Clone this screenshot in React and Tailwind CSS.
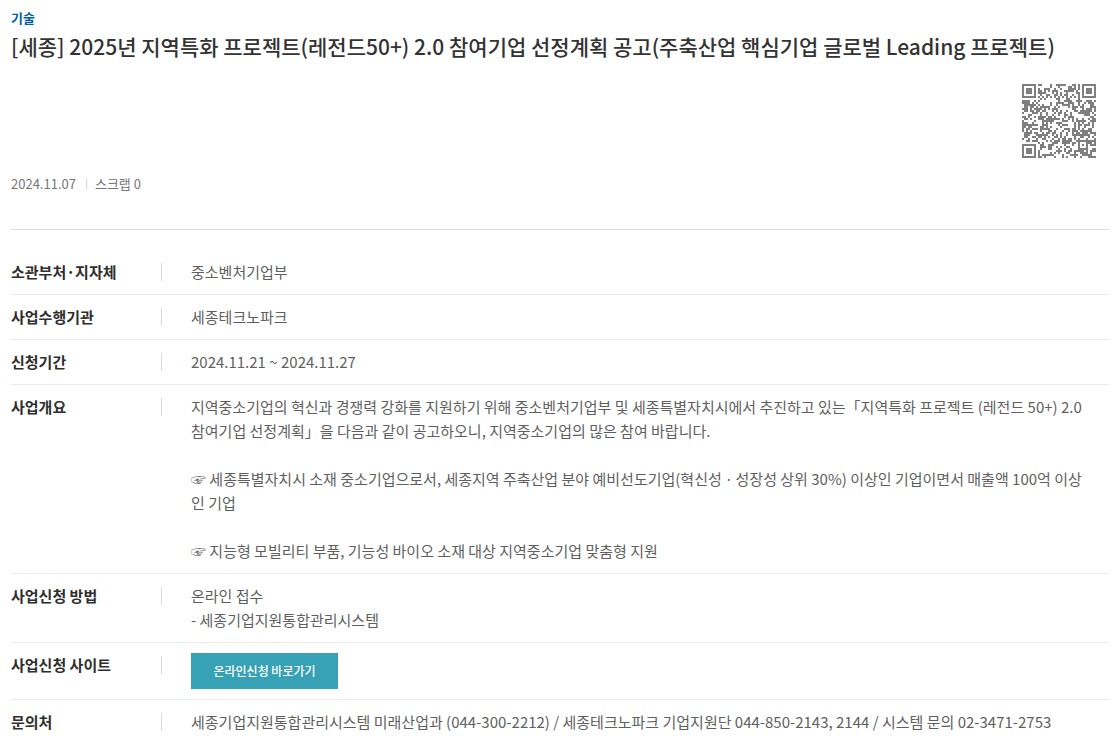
import React from "react";

const SIZE = 37;
const DATA_CODEWORDS = 108;
const EC_CODEWORDS = 26;

const EXP = [];
const LOG = [];
for (let i = 0, v = 1; i < 255; i++) {
  EXP[i] = v;
  LOG[v] = i;
  v = (v << 1) ^ (v & 128 ? 0x11d : 0);
}
const mul = (a, b) => (a && b ? EXP[(LOG[a] + LOG[b]) % 255] : 0);

// Byte-mode data followed by its Reed-Solomon remainder (version 5, level L).
function codewords(text) {
  const bits = [];
  const push = (value, length) => {
    for (let i = length - 1; i >= 0; i--) bits.push((value >> i) & 1);
  };
  push(4, 4);
  push(text.length, 8);
  for (const ch of text) push(ch.charCodeAt(0), 8);
  push(0, 4);
  const data = [];
  for (let i = 0; i < bits.length; i += 8) data.push(parseInt(bits.slice(i, i + 8).join(""), 2));
  for (let pad = 0xec; data.length < DATA_CODEWORDS; pad ^= 0xfd) data.push(pad);

  let gen = [1];
  for (let i = 0; i < EC_CODEWORDS; i++) {
    const next = [...gen, 0];
    gen.forEach((c, j) => (next[j + 1] ^= mul(c, EXP[i])));
    gen = next;
  }
  const rem = [...data, ...Array(EC_CODEWORDS).fill(0)];
  for (let i = 0; i < data.length; i++) {
    const f = rem[i];
    gen.forEach((c, j) => (rem[i + j] ^= mul(c, f)));
  }
  return [...data, ...rem.slice(data.length)];
}

const MASK = 3;
const masked = (x, y) => ((x + y) % 3 === 0 ? 1 : 0);

function qrPath(text) {
  const grid = Array.from({ length: SIZE }, () => Array(SIZE).fill(null));
  const set = (x, y, v) => {
    if (x >= 0 && y >= 0 && x < SIZE && y < SIZE) grid[y][x] = v ? 1 : 0;
  };

  // Timing, finder and alignment patterns
  for (let i = 0; i < SIZE; i++) {
    set(6, i, i % 2 === 0);
    set(i, 6, i % 2 === 0);
  }
  for (const [cx, cy] of [[3, 3], [SIZE - 4, 3], [3, SIZE - 4]]) {
    for (let dy = -4; dy <= 4; dy++)
      for (let dx = -4; dx <= 4; dx++) {
        const d = Math.max(Math.abs(dx), Math.abs(dy));
        set(cx + dx, cy + dy, d !== 2 && d !== 4);
      }
  }
  for (let dy = -2; dy <= 2; dy++)
    for (let dx = -2; dx <= 2; dx++) set(30 + dx, 30 + dy, Math.max(Math.abs(dx), Math.abs(dy)) !== 1);

  // Format information
  const info = (1 << 3) | MASK;
  let rem = info;
  for (let i = 0; i < 10; i++) rem = (rem << 1) ^ ((rem >>> 9) * 0x537);
  const format = ((info << 10) | rem) ^ 0x5412;
  const bit = (i) => (format >>> i) & 1;
  for (let i = 0; i < 6; i++) set(8, i, bit(i));
  set(8, 7, bit(6));
  set(8, 8, bit(7));
  set(7, 8, bit(8));
  for (let i = 9; i < 15; i++) set(14 - i, 8, bit(i));
  for (let i = 0; i < 8; i++) set(SIZE - 1 - i, 8, bit(i));
  for (let i = 8; i < 15; i++) set(8, SIZE - 15 + i, bit(i));
  set(8, SIZE - 8, 1);

  // Data, in two-column zigzags from the right
  const words = codewords(text);
  let n = 0;
  for (let right = SIZE - 1; right >= 1; right -= 2) {
    if (right === 6) right = 5;
    for (let v = 0; v < SIZE; v++)
      for (let j = 0; j < 2; j++) {
        const x = right - j;
        const y = ((right + 1) & 2) === 0 ? SIZE - 1 - v : v;
        if (grid[y][x] === null) {
          const value = n < words.length * 8 ? (words[n >> 3] >> (7 - (n & 7))) & 1 : 0;
          n++;
          set(x, y, value ^ masked(x, y));
        }
      }
  }
  return grid
    .flatMap((row, y) => row.map((cell, x) => (cell ? `M${x} ${y}h1v1h-1z` : "")))
    .join("");
}

const NOTICE_URL =
  "https://www.bizinfo.go.kr/web/lay1/bbs/S1T122C128/AS/74/view.do?pblancId=PBLN_000000000102670";

const noticePath = qrPath(NOTICE_URL);

function QrCode() {
  return (
    <svg
      role="img"
      aria-label="QR"
      viewBox="0 0 37 37"
      shapeRendering="crispEdges"
      className="size-[74px] text-[#7f7f7f]"
    >
      <path d={noticePath} fill="currentColor" />
    </svg>
  );
}

function Row({ label, children }) {
  return (
    <tr className="border-b border-[#ebebeb] align-top">
      <th scope="row" className="w-[180px] py-[10px] text-left font-bold text-[#2f2f2f]">
        <div className="flex w-[151px] items-center justify-between">
          {label}
          <span className="h-[18px] w-px bg-[#d9d9d9]" />
        </div>
      </th>
      <td className="py-[10px] text-[#5f5f5f]">{children}</td>
    </tr>
  );
}

export default function App() {
  return (
    <main className="bg-white pt-2 pr-[3px] pl-[11px] font-['Noto_Sans_CJK_KR',sans-serif]">
      <header className="border-b border-[#d9d9d9] pb-[35px]">
        <p className="text-[13px] leading-5 font-bold text-[#00629b]">기술</p>
        <h1 className="text-[21px] leading-9 font-medium text-[#333333]">
          [세종] 2025년 지역특화 프로젝트(레전드50+) 2.0 참여기업 선정계획 공고(주축산업 핵심기업 글로벌 Leading 프로젝트)
        </h1>
        <div className="flex justify-end pt-5 pr-[13px]">
          <QrCode />
        </div>
        <div className="mt-4 flex items-center text-[13px] leading-5 text-[#767676]">
          <span>2024.11.07</span>
          <span className="mr-2 ml-[10px] h-3 w-px bg-[#d9d9d9]" />
          <span>스크랩 0</span>
        </div>
      </header>

      <table className="mt-5 w-full border-collapse text-[15px] leading-6">
        <tbody>
          <Row label="소관부처·지자체">중소벤처기업부</Row>
          <Row label="사업수행기관">세종테크노파크</Row>
          <Row label="신청기간">2024.11.21 ~ 2024.11.27</Row>
          <Row label="사업개요">
            <p>
              지역중소기업의 혁신과 경쟁력 강화를 지원하기 위해 중소벤처기업부 및 세종특별자치시에서 추진하고 있는「지역특화 프로젝트 (레전드 50+) 2.0
              <br />
              참여기업 선정계획」을 다음과 같이 공고하오니, 지역중소기업의 많은 참여 바랍니다.
            </p>
            <p className="mt-6">
              ☞ 세종특별자치시 소재 중소기업으로서, 세종지역 주축산업 분야 예비선도기업(혁신성ㆍ성장성 상위 30%) 이상인 기업이면서 매출액 100억 이상
              <br />인 기업
            </p>
            <p className="mt-6">☞ 지능형 모빌리티 부품, 기능성 바이오 소재 대상 지역중소기업 맞춤형 지원</p>
          </Row>
          <Row label="사업신청 방법">
            온라인 접수
            <br />- 세종기업지원통합관리시스템
          </Row>
          <Row label="사업신청 사이트">
            <a
              href="#apply"
              className="flex h-9 w-[147px] items-center justify-center bg-[#37a1b5] text-[12px] font-medium text-white"
            >
              온라인신청 바로가기
            </a>
          </Row>
          <Row label="문의처">
            세종기업지원통합관리시스템 미래산업과 (044-300-2212) / 세종테크노파크 기업지원단 044-850-2143, 2144 / 시스템 문의 02-3471-2753
          </Row>
        </tbody>
      </table>
    </main>
  );
}
